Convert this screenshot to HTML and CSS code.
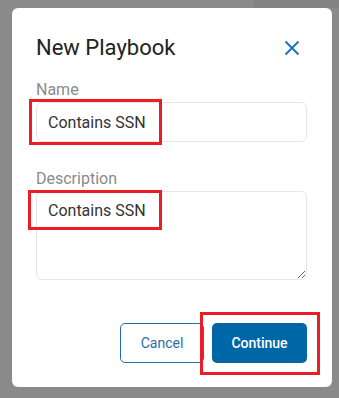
FILE: index.html
```html
<!DOCTYPE html>
<html lang="en">
<head>
    <meta charset="UTF-8">
    <meta name="viewport" content="width=device-width, initial-scale=1.0">
    <title>New Playbook</title>
    <link rel="stylesheet" href="styles.css">
</head>
<body>
    <div class="modal">
        <div class="modal-header">
            <h2>New Playbook</h2>
            <button class="close-btn" aria-label="Close">
                <svg width="16" height="16" viewBox="0 0 16 16">
                    <path d="M1.5 1.5 L14.5 14.5 M14.5 1.5 L1.5 14.5" stroke="#1b75bb" stroke-width="2" fill="none"/>
                </svg>
            </button>
        </div>

        <label for="name">Name</label>
        <div class="field">
            <input type="text" id="name" value="Contains SSN">
            <span class="highlight hl-name"></span>
        </div>

        <label for="description" class="desc-label">Description</label>
        <div class="field">
            <textarea id="description">Contains SSN</textarea>
            <span class="highlight hl-desc"></span>
        </div>

        <div class="actions">
            <button class="btn btn-cancel">Cancel</button>
            <span class="field">
                <button class="btn btn-primary">Continue</button>
                <span class="highlight hl-continue"></span>
            </span>
        </div>
    </div>
</body>
</html>
```

FILE: styles.css
```css
* {
    box-sizing: border-box;
}

body {
    margin: 0;
    height: 398px;
    padding: 8px 7px 0 12px;
    font-family: Roboto, "Liberation Sans", sans-serif;
    background: linear-gradient(#848484, #848484) no-repeat right top / 85px 8px, #8a8a8a;
    overflow: hidden;
}

.modal {
    width: 320px;
    height: 379px;
    padding: 24px 25px 24px 24px;
    background-color: #fff;
    border-radius: 6px;
}

.modal-header {
    display: flex;
    align-items: center;
    justify-content: space-between;
    height: 32px;
    margin-bottom: 14px;
}

h2 {
    margin: 0;
    font-size: 22px;
    font-weight: 400;
    line-height: 32px;
    color: #222;
}

.close-btn {
    display: flex;
    align-items: center;
    justify-content: center;
    width: 24px;
    height: 24px;
    margin-right: 3px;
    padding: 0;
    border: none;
    background: none;
    cursor: pointer;
}

label {
    display: block;
    font-size: 16px;
    line-height: 24px;
    color: #8a8a8a;
}

.desc-label {
    margin-top: 25px;
}

.field {
    position: relative;
    display: block;
}

input[type="text"],
textarea {
    display: block;
    width: 100%;
    margin: 0;
    border: 1px solid #e6e6e6;
    border-radius: 6px;
    font-family: Roboto, "Liberation Sans", sans-serif;
    font-size: 16px;
    color: #333;
    outline: none;
}

input[type="text"] {
    height: 40px;
    padding: 0 11px;
}

textarea {
    height: 89px;
    padding: 9px 11px;
    line-height: 19px;
    resize: vertical;
}

.highlight {
    position: absolute;
    border: 3px solid #ec1c24;
    pointer-events: none;
}

.hl-name {
    left: -7px;
    top: -3px;
    width: 133px;
    height: 46px;
}

.hl-desc {
    left: -8px;
    top: -1px;
    width: 134px;
    height: 40px;
}

.hl-continue {
    left: -12px;
    top: -11px;
    width: 120px;
    height: 63px;
}

.actions {
    display: flex;
    justify-content: flex-end;
    gap: 8px;
    margin-top: 43px;
}

.btn {
    display: block;
    height: 40px;
    border-radius: 5px;
    font-family: Roboto, "Liberation Sans", sans-serif;
    font-size: 14px;
    cursor: pointer;
}

.btn-cancel {
    width: 84px;
    border: 1px solid #1f6fa9;
    background-color: #fff;
    color: #1f6fa9;
}

.btn-primary {
    width: 95px;
    border: none;
    background-color: #0067a6;
    color: #fff;
    font-weight: 500;
}
```
